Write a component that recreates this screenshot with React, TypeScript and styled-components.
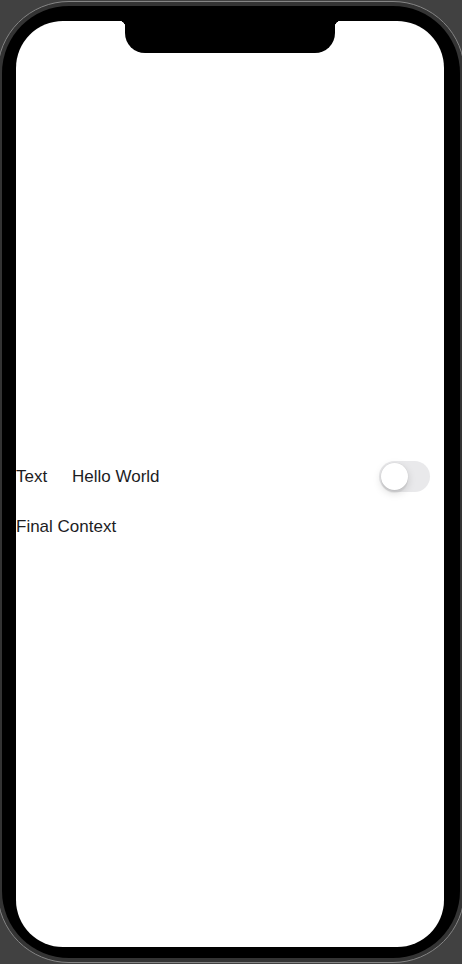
import * as React from "react";
import styled, { createGlobalStyle } from "styled-components";

const Global = createGlobalStyle`
  html, body {
    margin: 0;
    padding: 0;
    background: #414141;
    overflow: hidden;
  }
  body {
    font-family: "Liberation Sans", Arial, sans-serif;
  }
`

const Phone = styled.div`
  box-sizing: border-box;
  width: 468px;
  height: 962px;
  margin: 1px 0 0 -3px;
  border: 1px solid #858585;
  border-radius: 72px;
  background: #343434;
  padding: 4px;
`

const Body = styled.div`
  box-sizing: border-box;
  height: 100%;
  border-radius: 67px;
  background: #000;
  padding: 15px 16px 11px 14px;
`

const Screen = styled.div`
  position: relative;
  box-sizing: border-box;
  width: 428px;
  height: 926px;
  border-radius: 47px;
  background: #fff;
  overflow: hidden;
  padding-top: 440px;
  color: #1d1d1f;
  font-size: 17px;
`

const Notch = styled.div`
  position: absolute;
  top: 0;
  left: 109px;
  width: 210px;
  height: 32px;
  background: #000;
  border-radius: 0 0 20px 20px;
  &:before, &:after {
    content: "";
    position: absolute;
    top: 0;
    width: 6px;
    height: 6px;
  }
  &:before {
    left: -6px;
    background: radial-gradient(circle at 0 100%, transparent 6px, #000 6.5px);
  }
  &:after {
    right: -6px;
    background: radial-gradient(circle at 100% 100%, transparent 6px, #000 6.5px);
  }
`

const Row = styled.div`
  display: flex;
  align-items: center;
  height: 31px;
  padding-right: 14px;
`

const Label = styled.span`
  width: 56px;
  white-space: nowrap;
`

const Value = styled.span`
  flex: 1;
  white-space: nowrap;
`

const Switch = styled.div`
  position: relative;
  width: 51px;
  height: 31px;
  border-radius: 16px;
  background: #e9e9eb;
`

const Knob = styled.div<{ $on?: boolean }>`
  position: absolute;
  top: 2px;
  left: ${({ $on }) => ($on ? "22px" : "2px")};
  width: 27px;
  height: 27px;
  border-radius: 50%;
  background: #fff;
  box-shadow: 0 3px 8px rgba(0, 0, 0, 0.15), 0 3px 1px rgba(0, 0, 0, 0.06), 0 0 0 0.5px rgba(0, 0, 0, 0.04);
`

const Footer = styled.div`
  margin-top: 25px;
  line-height: 20px;
`

export default function App() {
  const [on, setOn] = React.useState(false)
  return (
    <>
      <Global />
      <Phone>
        <Body>
          <Screen>
            <Notch />
            <Row>
              <Label>Text</Label>
              <Value>Hello World</Value>
              <Switch onClick={() => setOn(!on)}>
                <Knob $on={on} />
              </Switch>
            </Row>
            <Footer>Final Context</Footer>
          </Screen>
        </Body>
      </Phone>
    </>
  )
}
